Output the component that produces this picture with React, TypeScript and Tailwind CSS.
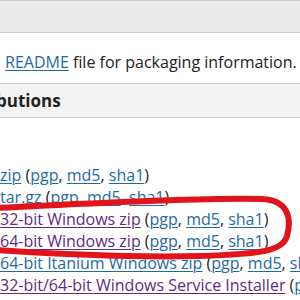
import React from "react";

const linkBlue = "text-[#1f6aa5] underline decoration-1 underline-offset-2";
const linkVisited = "text-[#5b2d82] underline decoration-1 underline-offset-2";

type Row = { label: string; visited?: boolean };

const rows: Row[] = [
  { label: "zip" },
  { label: "tar.gz" },
  { label: "32-bit Windows zip", visited: true },
  { label: "64-bit Windows zip", visited: true },
  { label: "64-bit Itanium Windows zip" },
  { label: "32-bit/64-bit Windows Service Installer", visited: true },
];

function Sigs() {
  return (
    <>
      {" ("}
      <a className={linkBlue}>pgp</a>, <a className={linkBlue}>md5</a>,{" "}
      <a className={linkBlue}>sha1</a>)
    </>
  );
}

export default function App() {
  return (
    <div className="relative w-[300px] h-[300px] overflow-hidden bg-white text-[#222] font-['Open_Sans','Liberation_Sans',sans-serif]">
      {/* page top bar */}
      <div className="h-[33px] bg-[#ebebeb] border-t border-b border-[#cfcfcf]" />

      <p className="mt-[18px] pl-[5px] text-[16px] leading-[22px] whitespace-nowrap">
        <a className={linkBlue}>README</a> file for packaging information. If
      </p>

      {/* section header */}
      <div className="mt-[10px] h-[35px] bg-[#f3f3f3] border-t border-b border-[#d2d2d2] flex items-center">
        <h2 className="ml-[-4px] text-[17px] font-bold leading-none">butions</h2>
      </div>

      <ul className="mt-[46px] text-[16px] leading-[22px] whitespace-nowrap">
        {rows.map((r) => (
          <li key={r.label}>
            <a className={r.visited ? linkVisited : linkBlue}>{r.label}</a>
            <Sigs />
          </li>
        ))}
      </ul>

      {/* red hand-drawn marker */}
      <svg className="absolute inset-0 pointer-events-none" width="300" height="300" viewBox="0 0 300 300">
        <path
          d="M -5 208 C 80 204, 200 197, 262 199 C 288 200, 292 218, 287 236 C 283 251, 262 254, 200 256 C 120 258, 40 253, -5 250"
          fill="none"
          stroke="#e2141b"
          strokeWidth="6"
          strokeLinecap="round"
        />
      </svg>
    </div>
  );
}
